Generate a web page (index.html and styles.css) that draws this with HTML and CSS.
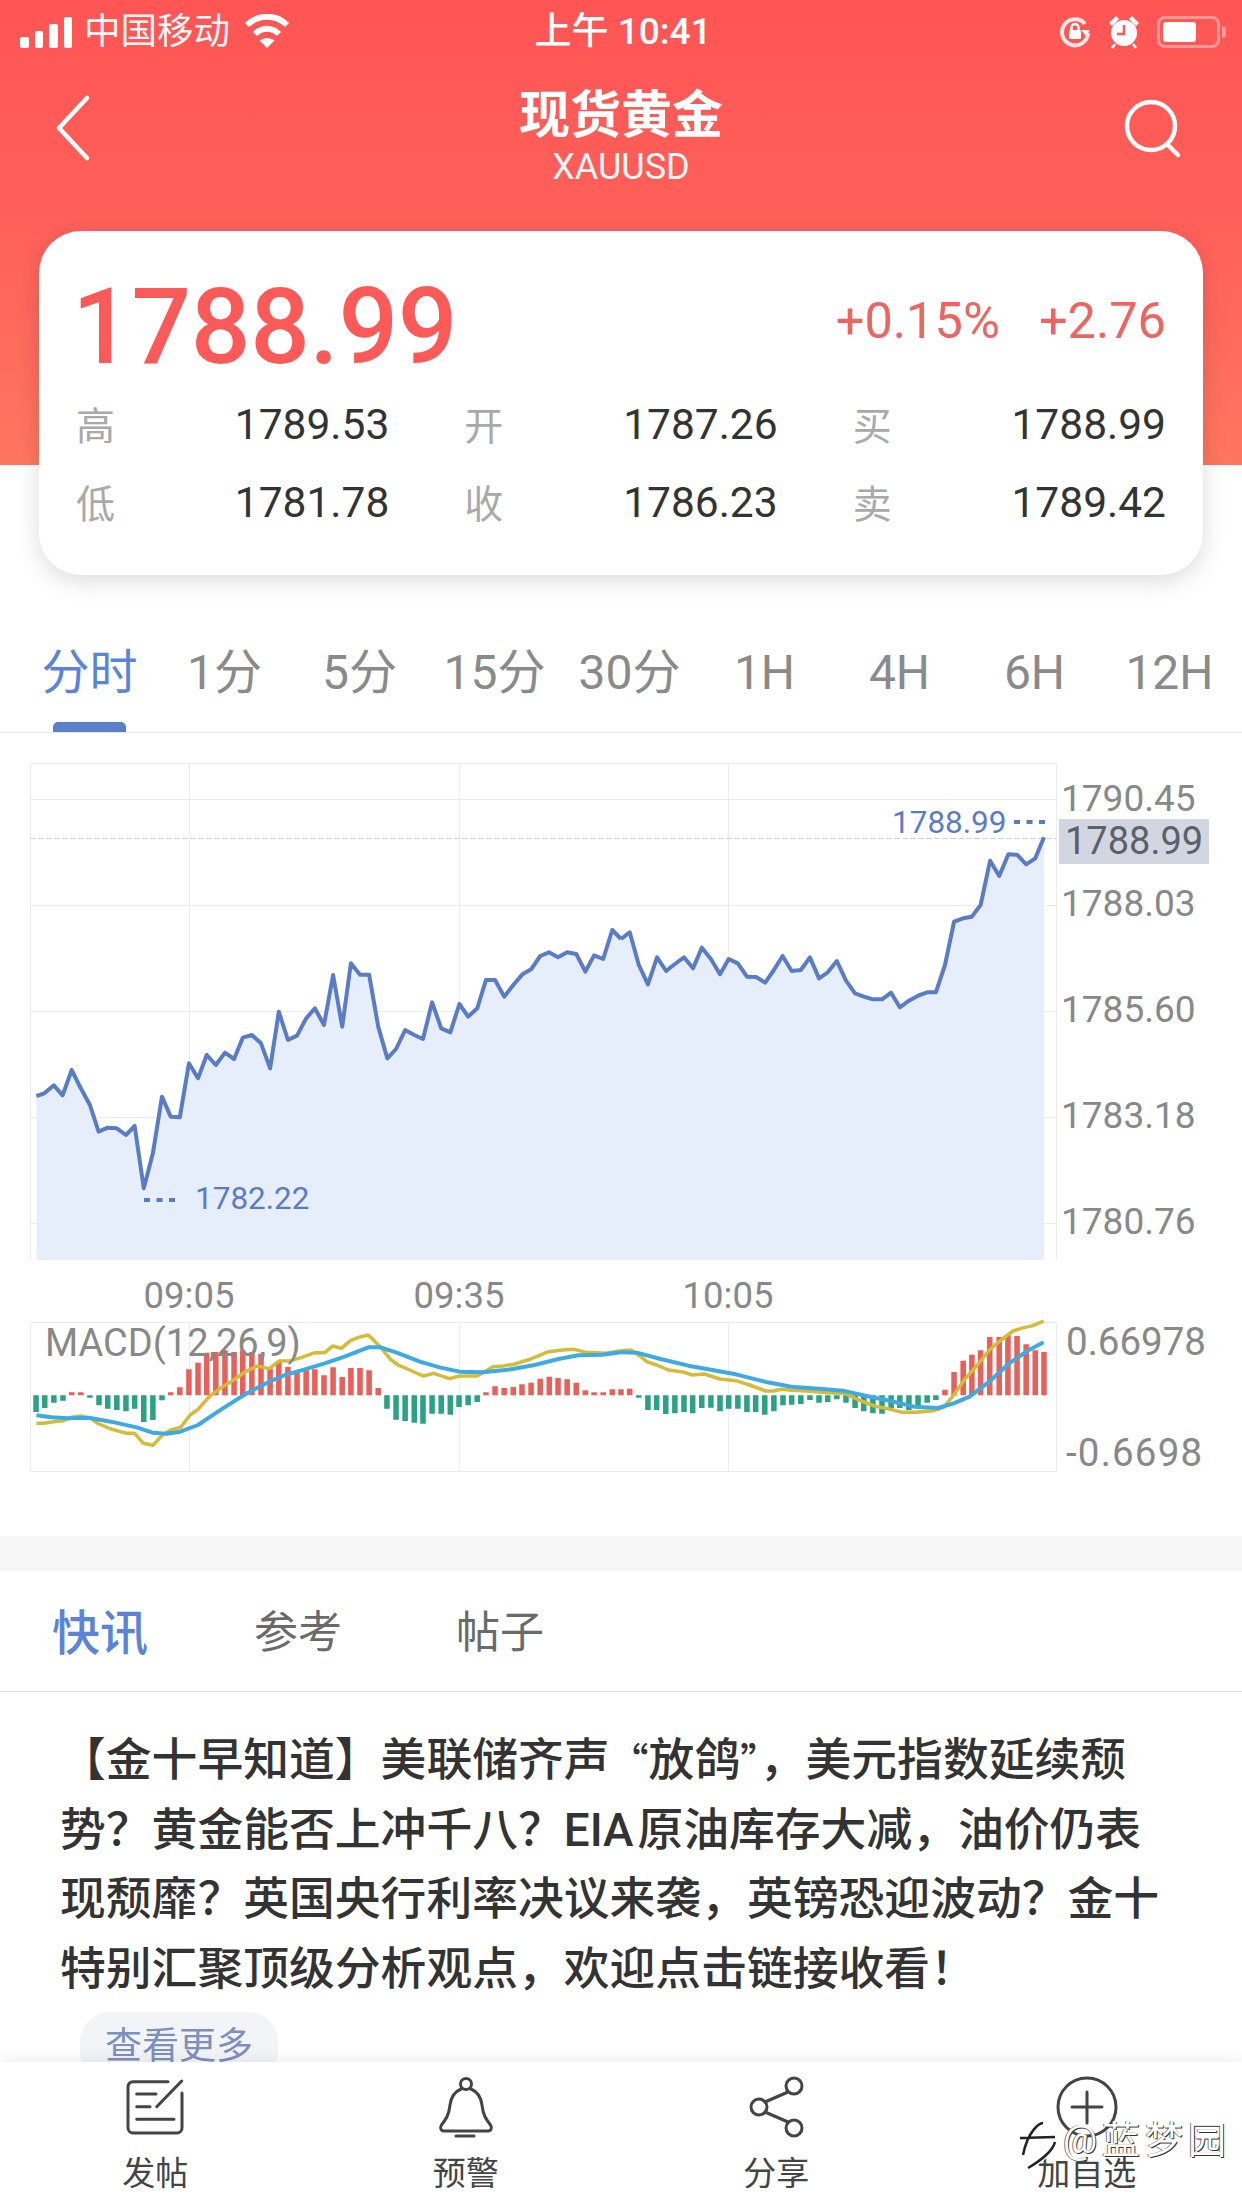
FILE: index.html
```html
<!DOCTYPE html>
<html lang="zh-CN">
<head>
<meta charset="utf-8">
<title>现货黄金 XAUUSD</title>
<link rel="stylesheet" href="styles.css">
</head>
<body>
<div class="page">
  <main class="main">
    <header class="hero">
      <div class="status">
        <div class="status-left">
          <div class="signal"><i class="b1"></i><i class="b2"></i><i class="b3"></i><i class="b4"></i></div>
          <span class="carrier">中国移动</span>
          <svg class="wifi" width="46" height="34" viewBox="0 0 46 34"><path class="wifi-arc" d="M3 11C14 0 32 0 43 11"/><path class="wifi-arc" d="M11 20C18 13 28 13 35 20"/><path class="wifi-dot" d="M23 34 15.500 26.500C20 23 26 23 30.500 26.500Z"/></svg>
        </div>
        <div class="clock">上午 10:41</div>
        <div class="status-right">
          <svg width="32" height="32" viewBox="0 0 32 32"><path class="rot" d="M26 8A13 13 0 1 0 29 17"/><path class="wifi-dot" d="M22 14 31 14 27 20Z"/><rect class="wifi-dot" x="10" y="14" width="12" height="9" rx="1.500"/><path class="rot-thin" d="M12.500 14V11.500A3.500 3.500 0 0 1 19.500 11.500V14"/></svg>
          <svg width="32" height="34" viewBox="0 0 32 34"><circle class="wifi-dot" cx="16" cy="18" r="13"/><path class="wifi-dot" d="M1 8 8 1 11 4 4 11ZM31 8 24 1 21 4 28 11Z"/><path class="clock-hand" d="M16 10V19H9"/><path class="rot-thin" d="M7 29 4 33M25 29 28 33"/></svg>
          <div class="battery"><div class="battery-fill"></div></div>
          <div class="battery-nub"></div>
        </div>
      </div>
      <nav class="nav">
        <svg class="nav-icon" width="72" height="80" viewBox="0 0 72 80"><path class="back" d="M39 10 11 40 39 70"/></svg>
        <div class="nav-title">
          <div class="title">现货黄金</div>
          <div class="subtitle">XAUUSD</div>
        </div>
        <svg class="nav-icon" width="72" height="80" viewBox="0 0 72 80"><circle class="back" cx="29" cy="38" r="24"/><path class="back" d="M45 56 56 67"/></svg>
      </nav>
    </header>

    <section class="card">
      <div class="quote">
        <div class="price">1788.99</div>
        <div class="change"><span>+0.15%</span><span>+2.76</span></div>
      </div>
      <div class="stats">
        <div class="stat"><span class="stat-label">高</span><span class="stat-value">1789.53</span></div>
        <div class="stat"><span class="stat-label">开</span><span class="stat-value">1787.26</span></div>
        <div class="stat"><span class="stat-label">买</span><span class="stat-value">1788.99</span></div>
        <div class="stat"><span class="stat-label">低</span><span class="stat-value">1781.78</span></div>
        <div class="stat"><span class="stat-label">收</span><span class="stat-value">1786.23</span></div>
        <div class="stat"><span class="stat-label">卖</span><span class="stat-value">1789.42</span></div>
      </div>
    </section>

    <div class="periods">
      <div class="period active">分时</div>
      <div class="period">1分</div>
      <div class="period">5分</div>
      <div class="period">15分</div>
      <div class="period">30分</div>
      <div class="period">1H</div>
      <div class="period">4H</div>
      <div class="period">6H</div>
      <div class="period">12H</div>
    </div>

    <svg class="chart" width="1242" height="803" viewBox="0 0 1242 803">
      <path class="grid" d="M30.500 527V30.500H1056.500V527M30.500 66.500H1056.500M30.500 172.500H1056.500M30.500 278.500H1056.500M30.500 384.500H1056.500M30.500 490.500H1056.500M189.500 30V527M459.500 30V527M728.500 30V527"/>
      <path class="grid-cur" d="M30 105.500H1056"/>
      <path class="grid" d="M30.500 738V589.500H1056.500V738.500H30.500M189.500 589V738M459.500 589V738M728.500 589V738"/>

      <g transform="translate(0 7) scale(.39605 .33333)">
        <polygon class="area" points="92,1560 92,1068 112,1060 136,1036 158,1066 181,990 204,1045 227,1095 249,1175 272,1163 295,1165 318,1185 340,1158 363,1345 386,1240 409,1070 431,1130 454,1132 477,970 500,1015 522,945 545,975 568,938 591,957 613,893 636,885 659,910 682,985 704,815 727,900 750,887 773,835 795,805 818,855 841,705 864,860 886,670 909,704 932,704 955,860 978,955 1000,927 1023,870 1046,885 1068,897 1091,787 1114,865 1137,877 1160,792 1182,830 1205,805 1227,720 1250,720 1273,770 1296,735 1319,703 1341,688 1364,648 1386,637 1409,652 1432,637 1455,642 1478,695 1500,646 1523,657 1546,570 1570,597 1570,1560"/>
        <polyline class="line" points="92,1068 112,1060 136,1036 158,1066 181,990 204,1045 227,1095 249,1175 272,1163 295,1165 318,1185 340,1158 363,1345 386,1240 409,1070 431,1130 454,1132 477,970 500,1015 522,945 545,975 568,938 591,957 613,893 636,885 659,910 682,985 704,815 727,900 750,887 773,835 795,805 818,855 841,705 864,860 886,670 909,704 932,704 955,860 978,955 1000,927 1023,870 1046,885 1068,897 1091,787 1114,865 1137,877 1160,792 1182,830 1205,805 1227,720 1250,720 1273,770 1296,735 1319,703 1341,688 1364,648 1386,637 1409,652 1432,637 1455,642 1478,695 1500,646 1523,657 1546,570 1568,597"/>
      </g>
      <g transform="translate(621 7) scale(.39605 .33333)">
        <polygon class="area" points="0,1560 0,597 22,577 45,675 68,733 91,652 114,693 136,672 159,652 182,685 204,623 227,657 250,703 272,657 295,670 318,710 341,711 364,728 386,690 408,648 431,693 454,690 477,652 500,715 522,697 545,663 568,722 591,760 613,770 636,778 659,778 682,758 704,802 727,782 750,767 773,757 795,757 818,675 841,545 864,535 886,530 908,495 932,362 955,408 978,343 1000,344 1023,373 1046,355 1068,292 1068,1560"/>
        <polyline class="line" points="0,597 22,577 45,675 68,733 91,652 114,693 136,672 159,652 182,685 204,623 227,657 250,703 272,657 295,670 318,710 341,711 364,728 386,690 408,648 431,693 454,690 477,652 500,715 522,697 545,663 568,722 591,760 613,770 636,778 659,778 682,758 704,802 727,782 750,767 773,757 795,757 818,675 841,545 864,535 886,530 908,495 932,362 955,408 978,343 1000,344 1023,373 1046,355 1068,292"/>
      </g>

      <path class="dots" d="M1014 89H1045M144 467H175"/>
      <text class="mark" x="892" y="100">1788.99</text>
      <text class="mark" x="195" y="476">1782.22</text>

      <rect class="cur-bg" x="1059" y="86" width="150" height="45"/>
      <text class="axis" x="1061" y="78">1790.45</text>
      <text class="axis cur" x="1065" y="121">1788.99</text>
      <text class="axis" x="1061" y="183">1788.03</text>
      <text class="axis" x="1061" y="289">1785.60</text>
      <text class="axis" x="1061" y="395">1783.18</text>
      <text class="axis" x="1061" y="501">1780.76</text>
      <text class="axis mid" x="189" y="575">09:05</text>
      <text class="axis mid" x="459" y="575">09:35</text>
      <text class="axis mid" x="728" y="575">10:05</text>

      <g transform="translate(0 557) scale(.39605 .33333)">
        <path class="bar-up" d="M181 316v-9M204 316v-9M431 316v-9M454 316v-24M477 316v-78M500 316v-98M522 316v-128M545 316v-130M568 316v-135M591 316v-130M613 316v-135M636 316v-130M659 316v-125M682 316v-80M704 316v-100M727 316v-85M750 316v-70M773 316v-75M795 316v-78M818 316v-60M841 316v-84M864 316v-55M886 316v-82M909 316v-82M932 316v-75M955 316v-22M1227 316v-9M1250 316v-27M1273 316v-22M1296 316v-25M1318 316v-33M1341 316v-38M1364 316v-50M1387 316v-56M1409 316v-52M1432 316v-48M1455 316v-38M1478 316v-15M1500 316v-9M1523 316v-9M1546 316v-18"/>
        <path class="bar-down" d="M91 316v50M113 316v38M136 316v22M159 316v16M227 316v7M250 316v30M272 316v40M295 316v44M318 316v48M340 316v40M363 316v80M386 316v74M409 316v15M977 316v40M1000 316v73M1023 316v77M1046 316v82M1068 316v85M1091 316v55M1114 316v55M1137 316v58M1159 316v35M1182 316v30M1205 316v20"/>
        <polyline class="dif" points="92,400 110,400 135,395 160,392 180,382 205,378 228,385 250,402 280,417 320,430 340,430 362,460 386,466 410,435 430,420 456,412 480,375 500,358 530,318 560,292 590,270 620,245 650,228 680,236 705,213 735,212 760,203 795,188 820,188 840,168 862,175 885,152 905,142 930,135 960,170 985,207 1005,225 1040,243 1068,258 1095,250 1135,266 1160,258 1205,258 1245,230 1270,228 1300,222 1340,207 1385,185 1420,180 1450,178 1480,187 1530,190 1568,182"/>
        <polyline class="dea" points="92,376 130,382 170,385 225,383 280,395 345,412 385,428 420,431 455,425 500,405 550,365 620,312 680,275 720,255 770,238 820,220 870,200 930,172 960,172 1000,187 1060,215 1110,232 1160,245 1220,247 1290,238 1350,225 1410,207 1460,196 1520,194 1568,187"/>
      </g>
      <g transform="translate(621 557) scale(.39605 .33333)">
        <path class="bar-up" d="M0 316v-18M22 316v-20M818 316v-17M841 316v-70M864 316v-104M886 316v-122M908 316v-135M931 316v-175M955 316v-175M977 316v-183M1000 316v-178M1023 316v-153M1046 316v-135M1068 316v-130"/>
        <path class="bar-down" d="M45 316v7M68 316v44M90 316v44M113 316v56M136 316v54M159 316v50M181 316v54M204 316v38M227 316v37M250 316v48M272 316v40M295 316v40M318 316v50M340 316v50M363 316v58M386 316v48M409 316v30M431 316v28M454 316v26M477 316v14M500 316v22M522 316v20M545 316v12M568 316v22M591 316v38M613 316v48M636 316v54M659 316v55M682 316v40M704 316v38M727 316v44M750 316v32M773 316v22M795 316v14"/>
        <polyline class="dif" points="0,182 25,180 50,200 65,215 90,225 120,240 160,247 180,255 210,252 250,267 290,272 325,285 365,303 385,303 405,298 430,301 470,303 520,308 565,310 600,330 640,348 680,358 710,367 745,367 790,362 815,352 840,315 870,265 900,225 930,180 960,150 990,123 1010,115 1040,107 1067,93"/>
        <polyline class="dea" points="0,187 40,188 100,207 170,227 220,238 290,253 370,277 430,290 500,296 560,302 620,318 680,333 740,350 800,354 840,340 880,320 930,275 980,220 1030,180 1067,157"/>
      </g>
      <text class="axis macd-label" x="45" y="623">MACD(12,26,9)</text>
      <text class="axis macd" x="1066" y="622">0.66978</text>
      <text class="axis macd neg" x="1066" y="733">-0.6698</text>
    </svg>

    <div class="divider"></div>

    <div class="news-tabs">
      <div class="news-tab active">快讯</div>
      <div class="news-tab">参考</div>
      <div class="news-tab">帖子</div>
    </div>

    <article class="news">
      <p class="news-text">【金十早知道】美联储齐声<span class="cjk">“</span>放鸽<span class="cjk">”</span>，美元指数延续颓<br>势？黄金能否上冲千八？<span class="latin">EIA</span>原油库存大减，油价仍表<br>现颓靡？英国央行利率决议来袭，英镑恐迎波动？金十<br>特别汇聚顶级分析观点，欢迎点击链接收看！</p>
      <div class="more">查看更多</div>
    </article>
  </main>

  <footer class="footer">
    <div class="tool">
      <svg class="tool-icon" width="64" height="64" viewBox="0 0 64 64"><path d="M45 6.700H10a5 5 0 0 0-5 5V53a5 5 0 0 0 5 5H54a5 5 0 0 0 5-5V18M58.700 6 33.700 31.700M13.700 19H33M13.700 31.700H27M13.700 44.300H51"/></svg>
      <span>发帖</span>
    </div>
    <div class="tool">
      <svg class="tool-icon" width="64" height="64" viewBox="0 0 64 64"><circle cx="32" cy="9" r="5.500"/><path d="M27 14C20 17 17 22 16 30 15 40 12 44 7.500 50 5.500 53 7 56 10 56H54C57 56 58.500 53 56.500 50 52 44 49 40 48 30 47 22 44 17 37 14M22 61H40"/></svg>
      <span>预警</span>
    </div>
    <div class="tool">
      <svg class="tool-icon" width="64" height="64" viewBox="0 0 64 64"><circle cx="50" cy="11" r="8"/><circle cx="15" cy="32" r="8"/><circle cx="50" cy="53" r="8"/><path d="M44 17 21 27M21 37 44 47"/></svg>
      <span>分享</span>
    </div>
    <div class="tool">
      <svg class="tool-icon" width="64" height="64" viewBox="0 0 64 64"><circle cx="32" cy="32" r="29"/><path d="M17 32H47M32 17V48"/></svg>
      <span>加自选</span>
    </div>
  </footer>

  <div class="watermark">
    <svg class="wm-logo" width="38" height="52" viewBox="0 0 38 52"><path class="wm-halo" d="M3 37C8 12 20 5 23 5M0 20 35 19M35 24C33 32 22 42 8 50"/><path class="wm-dark" d="M3 37C8 12 20 5 23 5M0 20 35 19M35 24C33 32 22 42 8 50"/></svg>
    <span class="wm-text">@蓝梦园</span>
  </div>
</div>
</body>
</html>
```
FILE: styles.css
```css
* { box-sizing: border-box; }
html, body { margin: 0; padding: 0; background: #fff; }
body { font-family: Roboto, "Noto Sans CJK SC", sans-serif; color: #333; }
.page { position: relative; width: 1242px; height: 2208px; display: flex; flex-direction: column; overflow: hidden; }
.main { flex: 1; min-height: 0; overflow: hidden; }

.hero { height: 465px; background: linear-gradient(#ff5555 0%, #ff5f59 45%, #ff7660 100%); color: #fff; }
.status { height: 64px; display: grid; grid-template-columns: 1fr auto 1fr; align-items: center; padding: 0 16px 0 20px; }
.status-left { display: flex; align-items: center; }
.signal { display: flex; align-items: flex-end; gap: 6px; height: 32px; }
.signal i { display: block; width: 8.500px; background: #fff; border-radius: 2px; }
.b1 { height: 11px; } .b2 { height: 17px; } .b3 { height: 24px; } .b4 { height: 31px; }
.carrier { font-size: 36.500px; line-height: 44px; margin-left: 12px; opacity: .95; }
.wifi { margin-left: 14px; margin-top: -3px; }
.wifi-arc { fill: none; stroke: #fff; stroke-width: 6; }
.wifi-dot { fill: #fff; }
.clock { font-size: 37px; font-weight: 500; line-height: 44px; }
.status-right { display: flex; align-items: center; justify-content: flex-end; }
.status-right svg { margin-right: 17px; }
.rot { fill: none; stroke: #ffe6e4; stroke-width: 4; }
.rot-thin { fill: none; stroke: #fff; stroke-width: 2.500; }
.clock-hand { fill: none; stroke: #ff5a58; stroke-width: 2.500; }
.battery { width: 63px; height: 32px; border: 3px solid rgba(255,255,255,.4); border-radius: 8px; padding: 3px; }
.battery-fill { width: 33px; height: 100%; background: #fff; border-radius: 3px; }
.battery-nub { width: 4px; height: 12px; margin-left: 2px; background: rgba(255,255,255,.4); border-radius: 0 3px 3px 0; }

.nav { display: flex; justify-content: space-between; align-items: flex-start; padding: 26px 48px 0; height: 122px; }
.nav-icon { display: block; margin-top: -2px; }
.nav-title { text-align: center; margin-top: -4px; }
.title { font-size: 51px; font-weight: 700; line-height: 60px; }
.subtitle { font-size: 36px; line-height: 42px; opacity: .95; }
.back { fill: none; stroke: #fff; stroke-width: 4.500; stroke-linecap: round; stroke-linejoin: round; }

.card { position: relative; margin: -234px 39px 0; height: 344px; padding: 33px 37px 0; background: #fff; border-radius: 42px; box-shadow: 0 6px 24px rgba(0,0,0,.14); }
.quote { display: flex; justify-content: space-between; align-items: center; height: 120px; }
.price { font-size: 105px; font-weight: 500; line-height: 120px; color: #fb5a58; letter-spacing: -.3px; margin: 7px 0 0 -4px; }
.change { display: flex; gap: 39px; font-size: 50.500px; line-height: 60px; color: #ee6460; margin-top: -7px; }
.stats { display: grid; grid-template-columns: repeat(3, 1fr); column-gap: 75px; margin-top: 1px; }
.stat { display: flex; justify-content: space-between; align-items: center; height: 78px; }
.stat-label { font-size: 39px; color: #a9a9a9; margin-top: -3px; }
.stat-value { font-size: 42.500px; color: #333; }

.periods { display: grid; grid-template-columns: repeat(9, 135px); padding: 0 22px; height: 158px; border-bottom: 1px solid #e8e8e8; }
.period { position: relative; height: 157px; padding-top: 36px; text-align: center; font-size: 48px; line-height: 124px; color: #8a8a8a; white-space: nowrap; }
.period.active { color: #5b83d8; }
.period.active::after { content: ""; position: absolute; left: 31px; bottom: 0; width: 73px; height: 10px; background: #5b7fcb; border-radius: 5px 5px 0 0; }

.chart { display: block; }
.grid { fill: none; stroke: #ececec; stroke-width: 1; }
.grid-cur { fill: none; stroke: #d4d4d4; stroke-width: 1; stroke-dasharray: 6 2; }
.area { fill: #e6eefb; }
.line { fill: none; stroke: #5a7cc6; stroke-width: 4; stroke-linejoin: round; vector-effect: non-scaling-stroke; }
.dots { fill: none; stroke: #5a7cc6; stroke-width: 4; stroke-dasharray: 6 6.500; }
.mark { font-size: 31.500px; fill: #5a7cc6; }
.cur-bg { fill: #d1d6e1; }
.axis { font-size: 37px; fill: #888; }
.axis.cur { font-size: 38px; fill: #5c6068; }
.axis.mid { font-size: 36.500px; text-anchor: middle; }
.axis.macd { font-size: 38.500px; }
.axis.macd.neg { letter-spacing: 1.200px; }
.axis.macd-label { font-size: 38px; }
.bar-up { fill: none; stroke: #e95f59; stroke-width: 14; }
.bar-down { fill: none; stroke: #2ba283; stroke-width: 14; }
.dif { fill: none; stroke: #d4bc38; stroke-width: 3.500; stroke-linejoin: round; vector-effect: non-scaling-stroke; }
.dea { fill: none; stroke: #3fa9e2; stroke-width: 4; stroke-linejoin: round; vector-effect: non-scaling-stroke; }

.divider { height: 35px; background: #f6f6f6; }
.news-tabs { display: flex; gap: 114px; align-items: center; height: 121px; padding: 0 0 5px 52px; border-bottom: 1px solid #e6e6e6; }
.news-tab { font-size: 44px; color: #6a6a6a; }
.news-tab.active { font-size: 48px; font-weight: 500; color: #5b83d8; margin-right: -8px; }

.news { padding: 33px 40px 0 60px; }
.news-text { margin: 0; font-size: 45.800px; font-weight: 500; line-height: 69.500px; color: #333; white-space: nowrap; }
.cjk { font-family: "Noto Sans CJK SC", sans-serif; font-size: 39px; }
.latin { margin-right: 4px; }
.more { display: inline-block; margin: 8px 0 0 20px; padding: 0 25px; height: 70px; line-height: 70px; font-size: 37px; color: #7c8fbe; background: #f3f4f7; border-radius: 30px; }

.footer { height: 146px; padding-top: 13px; display: grid; grid-template-columns: repeat(4, 1fr); background: #fff; box-shadow: 0 -4px 12px rgba(0,0,0,.06); position: relative; }
.tool { display: flex; flex-direction: column; align-items: center; color: #444; font-size: 33px; line-height: 40px; }
.tool span { margin-top: 15px; }
.tool-icon { display: block; fill: none; stroke: #444; stroke-width: 3; stroke-linecap: round; stroke-linejoin: round; }

.watermark { position: absolute; left: 1020px; top: 2118px; display: flex; align-items: flex-start; gap: 5px; }
.wm-logo { display: block; }
.wm-halo { fill: none; stroke: #fff; stroke-width: 5; }
.wm-dark { fill: none; stroke: #222; stroke-width: 2.500; }
.wm-text { font-size: 38px; line-height: 44px; letter-spacing: 5px; color: #fff; text-shadow: 1px 1px 0 #333, -1px 0 0 #777; }
```
